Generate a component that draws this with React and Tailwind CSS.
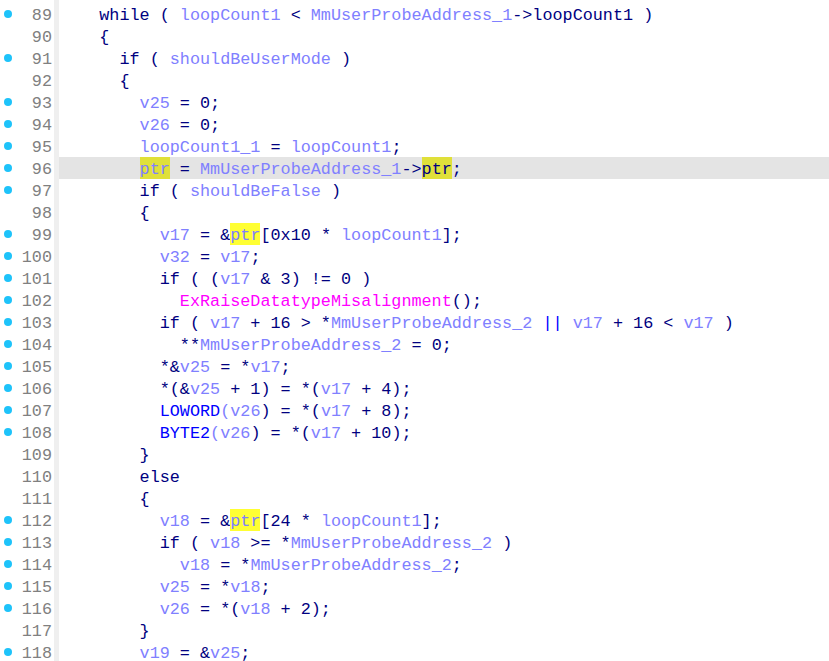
import React from 'react';

// token colours, IDA pseudocode style
const C = {
  n: 'text-[#000080]',
  v: 'text-[#8080ff]',
  f: 'text-[#ff00ff]',
  m: 'text-[#0000ff]',
};

// each line: [number, hasDot, segments]; segment = [text, colour, highlight]
const lines = [
  [89, true, [['    while ( ', 'n'], ['loopCount1', 'v'], [' < ', 'n'], ['MmUserProbeAddress_1', 'v'], ['->loopCount1 )', 'n']]],
  [90, false, [['    {', 'n']]],
  [91, true, [['      if ( ', 'n'], ['shouldBeUserMode', 'v'], [' )', 'n']]],
  [92, false, [['      {', 'n']]],
  [93, true, [['        ', 'n'], ['v25', 'v'], [' = 0;', 'n']]],
  [94, true, [['        ', 'n'], ['v26', 'v'], [' = 0;', 'n']]],
  [95, true, [['        ', 'n'], ['loopCount1_1', 'v'], [' = ', 'n'], ['loopCount1', 'v'], [';', 'n']]],
  [96, true, [['        ', 'n'], ['ptr', 'v', true], [' = ', 'n'], ['MmUserProbeAddress_1', 'v'], ['->', 'n'], ['ptr', 'n', true], [';', 'n']]],
  [97, true, [['        if ( ', 'n'], ['shouldBeFalse', 'v'], [' )', 'n']]],
  [98, false, [['        {', 'n']]],
  [99, true, [['          ', 'n'], ['v17', 'v'], [' = &', 'n'], ['ptr', 'v', true], ['[0x10 * ', 'n'], ['loopCount1', 'v'], ['];', 'n']]],
  [100, true, [['          ', 'n'], ['v32', 'v'], [' = ', 'n'], ['v17', 'v'], [';', 'n']]],
  [101, true, [['          if ( (', 'n'], ['v17', 'v'], [' & 3) != 0 )', 'n']]],
  [102, true, [['            ', 'n'], ['ExRaiseDatatypeMisalignment', 'f'], ['();', 'n']]],
  [103, true, [['          if ( ', 'n'], ['v17', 'v'], [' + 16 > *', 'n'], ['MmUserProbeAddress_2', 'v'], [' ', 'n'], ['||', 'm'], [' ', 'n'], ['v17', 'v'], [' + 16 < ', 'n'], ['v17', 'v'], [' )', 'n']]],
  [104, true, [['            **', 'n'], ['MmUserProbeAddress_2', 'v'], [' = 0;', 'n']]],
  [105, true, [['          *&', 'n'], ['v25', 'v'], [' = *', 'n'], ['v17', 'v'], [';', 'n']]],
  [106, true, [['          *(&', 'n'], ['v25', 'v'], [' + 1) = *(', 'n'], ['v17', 'v'], [' + 4);', 'n']]],
  [107, true, [['          ', 'n'], ['LOWORD', 'm'], ['(', 'v'], ['v26', 'v'], [') = *(', 'n'], ['v17', 'v'], [' + 8);', 'n']]],
  [108, true, [['          ', 'n'], ['BYTE2', 'm'], ['(', 'v'], ['v26', 'v'], [') = *(', 'n'], ['v17', 'v'], [' + 10);', 'n']]],
  [109, false, [['        }', 'n']]],
  [110, false, [['        else', 'n']]],
  [111, false, [['        {', 'n']]],
  [112, true, [['          ', 'n'], ['v18', 'v'], [' = &', 'n'], ['ptr', 'v', true], ['[24 * ', 'n'], ['loopCount1', 'v'], ['];', 'n']]],
  [113, true, [['          if ( ', 'n'], ['v18', 'v'], [' >= *', 'n'], ['MmUserProbeAddress_2', 'v'], [' )', 'n']]],
  [114, true, [['            ', 'n'], ['v18', 'v'], [' = *', 'n'], ['MmUserProbeAddress_2', 'v'], [';', 'n']]],
  [115, true, [['          ', 'n'], ['v25', 'v'], [' = *', 'n'], ['v18', 'v'], [';', 'n']]],
  [116, true, [['          ', 'n'], ['v26', 'v'], [' = *(', 'n'], ['v18', 'v'], [' + 2);', 'n']]],
  [117, false, [['        }', 'n']]],
  [118, true, [['        ', 'n'], ['v19', 'v'], [' = &', 'n'], ['v25', 'v'], [';', 'n']]],
];

const CURRENT = 96;

const Row = ({ num, dot, segs }) => {
  const current = num === CURRENT;
  return (
    <div className="flex h-[22px]">
      <div className="relative h-full w-[54px] shrink-0 pr-[2px] text-right leading-[26px] text-[#808080]">
        {dot && <span className="absolute left-[4px] top-[7px] h-[8px] w-[8px] rounded-full bg-[#1ec3fa]" />}
        {num}
      </div>
      <div className="h-full w-[5px] shrink-0 bg-[#efefef]" />
      <div className={`h-full flex-1 whitespace-pre ${current ? 'bg-[#e4e4e4]' : ''}`}>
        {segs.map(([text, col, hl], i) => (
          <span
            key={i}
            className={`inline-block h-[22px] align-top leading-[26px] ${C[col]} ${hl ? (current ? 'bg-[#e0e03a]' : 'bg-[#ffff33]') : ''}`}
          >
            {text}
          </span>
        ))}
      </div>
    </div>
  );
};

export default function App() {
  return (
    <div className="h-[661px] w-[829px] overflow-hidden bg-white font-['Liberation_Mono',monospace] text-[16.8px] leading-[22px]">
      <div className="flex">
        <div className="h-[3px] w-[54px]" />
        <div className="h-[3px] w-[5px] bg-[#efefef]" />
      </div>
      {lines.map(([num, dot, segs]) => (
        <Row key={num} num={num} dot={dot} segs={segs} />
      ))}
      <div className="flex h-[40px]">
        <div className="w-[54px]" />
        <div className="w-[5px] bg-[#efefef]" />
      </div>
    </div>
  );
}
